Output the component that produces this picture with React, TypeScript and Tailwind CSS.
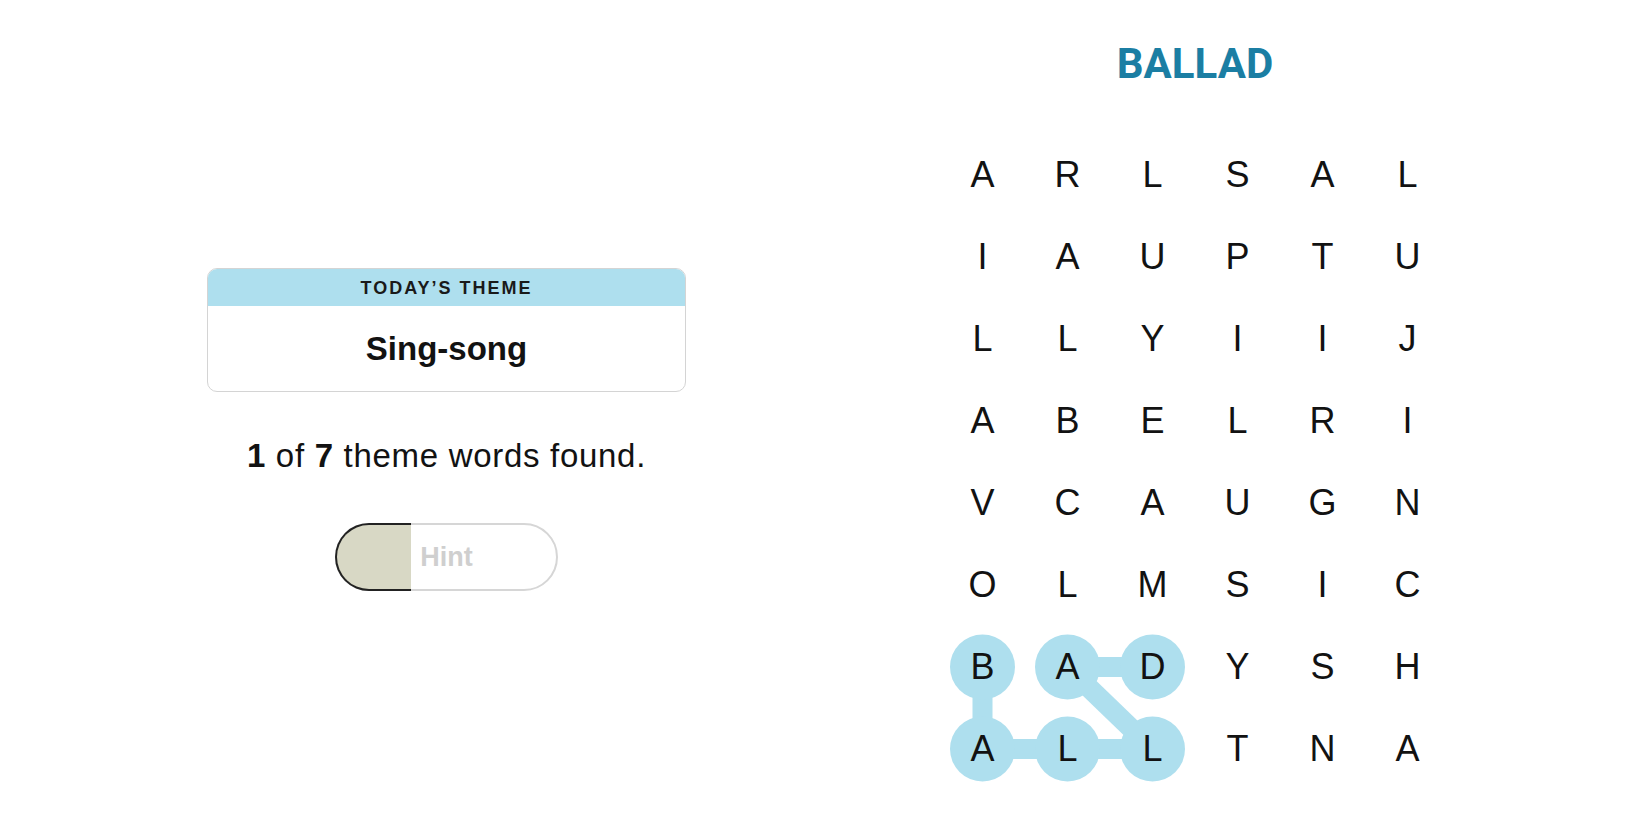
import React from "react";

const grid = [
  "ARLSAL",
  "IAUPTU",
  "LLYIIJ",
  "ABELRI",
  "VCAUGN",
  "OLMSIC",
  "BADYSH",
  "ALLTNA",
];

const CELL_W = 85;
const CELL_H = 82;

// cells of the found word, in order: B A L L A D
const found: [number, number][] = [
  [6, 0],
  [7, 0],
  [7, 1],
  [7, 2],
  [6, 1],
  [6, 2],
];

const center = ([r, c]: [number, number]) => ({
  x: c * CELL_W + CELL_W / 2,
  y: r * CELL_H + CELL_H / 2,
});

function FoundPath() {
  const pts = found.map(center);
  return (
    <svg
      className="pointer-events-none absolute inset-0"
      width={CELL_W * 6}
      height={CELL_H * 8}
    >
      {pts.slice(1).map((p, i) => (
        <line
          key={i}
          x1={pts[i].x}
          y1={pts[i].y}
          x2={p.x}
          y2={p.y}
          stroke="#aedfee"
          strokeWidth={20}
        />
      ))}
      {pts.map((p, i) => (
        <circle key={i} cx={p.x} cy={p.y} r={32.5} fill="#aedfee" />
      ))}
    </svg>
  );
}

export default function App() {
  return (
    <div className="flex min-h-screen w-full bg-white font-['Liberation_Sans',Arial,sans-serif] text-[#121212]">
      {/* left: theme + progress */}
      <section className="ml-[207px] flex w-[479px] flex-col items-center pt-[268px]">
        <div className="flex h-[124px] w-full flex-col overflow-hidden rounded-[10px] border border-[#d4d4d4]">
          <div className="flex h-[37px] items-center justify-center bg-[#aedfee]">
            <span className="text-[18px] leading-none font-semibold tracking-[2px] text-[#1a1a1a]">
              TODAY’S THEME
            </span>
          </div>
          <div className="flex flex-1 items-center justify-center">
            <h2 className="text-[33px] leading-none font-bold">Sing-song</h2>
          </div>
        </div>

        <p className="mt-[47px] text-[33px] leading-none tracking-[0.7px]">
          <span className="font-bold">1</span> of <span className="font-bold">7</span> theme
          words found.
        </p>

        <button className="relative mt-[51px] flex h-[68px] w-[223px] items-center justify-center rounded-full border-2 border-[#d6d6d6] bg-white">
          <span className="absolute -top-[2px] -bottom-[2px] -left-[2px] w-[76px] rounded-l-full border-2 border-r-0 border-[#222] bg-[#d8d8c5]" />
          <span className="relative text-[27px] leading-none font-bold text-[#cfcfcf]">Hint</span>
        </button>
      </section>

      {/* right: board */}
      <section className="ml-[254px] flex w-[510px] flex-col items-center pt-[43px]">
        <h1 className="font-['Roboto',Arial,sans-serif] text-[42px] leading-none font-bold text-[#1b7ea3]">
          BALLAD
        </h1>
        <div className="relative mt-[49px] grid grid-cols-6">
          <FoundPath />
          {grid.map((row, r) =>
            row.split("").map((ch, c) => (
              <div
                key={`${r}-${c}`}
                className="relative flex h-[82px] w-[85px] items-center justify-center text-[36px] leading-none"
              >
                {ch}
              </div>
            ))
          )}
        </div>
      </section>
    </div>
  );
}
